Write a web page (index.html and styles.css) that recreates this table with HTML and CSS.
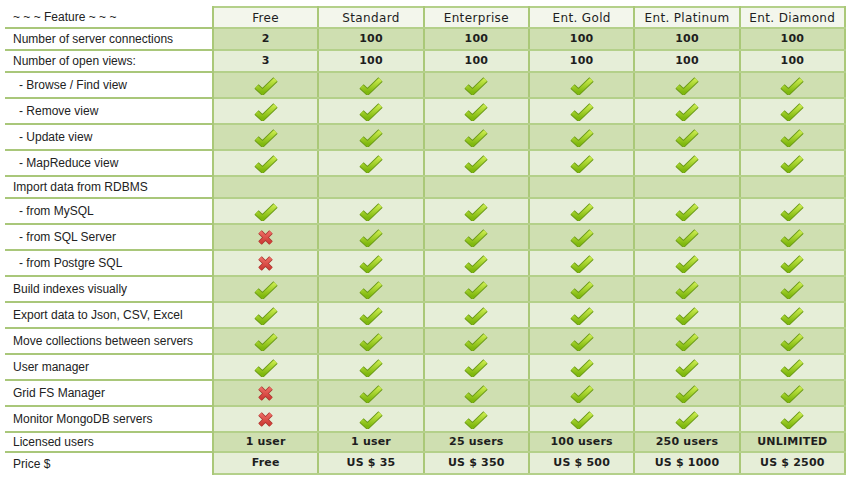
FILE: index.html
```html
<!DOCTYPE html>
<html>
<head>
<meta charset="utf-8">
<link rel="stylesheet" href="styles.css">
</head>
<body>
<svg class="defs" width="0" height="0">
  <defs>
    <linearGradient id="gchk" x1="0" y1="0" x2="0" y2="1">
      <stop offset="0" stop-color="#c8ea4c"/>
      <stop offset="1" stop-color="#7fb80e"/>
    </linearGradient>
    <linearGradient id="gx" x1="0" y1="0" x2="0" y2="1">
      <stop offset="0" stop-color="#ec6a62"/>
      <stop offset="1" stop-color="#cc3a34"/>
    </linearGradient>
    <g id="chk">
      <path d="M2.5 9.5 L8.5 15 L21.5 2.5" fill="none" stroke="#6b9a18" stroke-width="6.2" stroke-linejoin="miter"/>
      <path d="M2.5 9.5 L8.5 15 L21.5 2.5" fill="none" stroke="url(#gchk)" stroke-width="4.4" stroke-linejoin="miter"/>
    </g>
    <g id="crs">
      <path d="M3 3 L14 14 M14 3 L3 14" fill="none" stroke="#a83430" stroke-width="5"/>
      <path d="M3 3 L14 14 M14 3 L3 14" fill="none" stroke="url(#gx)" stroke-width="3.4"/>
    </g>
  </defs>
</svg>
<div class="wrap">
<table class="cmp">
  <colgroup>
    <col class="c-feat"><col><col><col><col><col><col>
  </colgroup>
  <tr class="head">
    <td class="feat">~ ~ ~ Feature ~ ~ ~</td>
    <td>Free</td><td>Standard</td><td>Enterprise</td><td>Ent. Gold</td><td>Ent. Platinum</td><td>Ent. Diamond</td>
  </tr>
  <tr class="txt dark">
    <td class="feat">Number of server connections</td>
    <td>2</td><td>100</td><td>100</td><td>100</td><td>100</td><td>100</td>
  </tr>
  <tr class="txt light">
    <td class="feat">Number of open views:</td>
    <td>3</td><td>100</td><td>100</td><td>100</td><td>100</td><td>100</td>
  </tr>
  <tr class="ic dark">
    <td class="feat sub">- Browse / Find view</td>
    <td><svg class="chk" viewBox="0 0 24 18"><use href="#chk"/></svg></td><td><svg class="chk" viewBox="0 0 24 18"><use href="#chk"/></svg></td><td><svg class="chk" viewBox="0 0 24 18"><use href="#chk"/></svg></td><td><svg class="chk" viewBox="0 0 24 18"><use href="#chk"/></svg></td><td><svg class="chk" viewBox="0 0 24 18"><use href="#chk"/></svg></td><td><svg class="chk" viewBox="0 0 24 18"><use href="#chk"/></svg></td>
  </tr>
  <tr class="ic light">
    <td class="feat sub">- Remove view</td>
    <td><svg class="chk" viewBox="0 0 24 18"><use href="#chk"/></svg></td><td><svg class="chk" viewBox="0 0 24 18"><use href="#chk"/></svg></td><td><svg class="chk" viewBox="0 0 24 18"><use href="#chk"/></svg></td><td><svg class="chk" viewBox="0 0 24 18"><use href="#chk"/></svg></td><td><svg class="chk" viewBox="0 0 24 18"><use href="#chk"/></svg></td><td><svg class="chk" viewBox="0 0 24 18"><use href="#chk"/></svg></td>
  </tr>
  <tr class="ic dark">
    <td class="feat sub">- Update view</td>
    <td><svg class="chk" viewBox="0 0 24 18"><use href="#chk"/></svg></td><td><svg class="chk" viewBox="0 0 24 18"><use href="#chk"/></svg></td><td><svg class="chk" viewBox="0 0 24 18"><use href="#chk"/></svg></td><td><svg class="chk" viewBox="0 0 24 18"><use href="#chk"/></svg></td><td><svg class="chk" viewBox="0 0 24 18"><use href="#chk"/></svg></td><td><svg class="chk" viewBox="0 0 24 18"><use href="#chk"/></svg></td>
  </tr>
  <tr class="ic light">
    <td class="feat sub">- MapReduce view</td>
    <td><svg class="chk" viewBox="0 0 24 18"><use href="#chk"/></svg></td><td><svg class="chk" viewBox="0 0 24 18"><use href="#chk"/></svg></td><td><svg class="chk" viewBox="0 0 24 18"><use href="#chk"/></svg></td><td><svg class="chk" viewBox="0 0 24 18"><use href="#chk"/></svg></td><td><svg class="chk" viewBox="0 0 24 18"><use href="#chk"/></svg></td><td><svg class="chk" viewBox="0 0 24 18"><use href="#chk"/></svg></td>
  </tr>
  <tr class="txt dark">
    <td class="feat">Import data from RDBMS</td>
    <td></td><td></td><td></td><td></td><td></td><td></td>
  </tr>
  <tr class="ic light">
    <td class="feat sub">- from MySQL</td>
    <td><svg class="chk" viewBox="0 0 24 18"><use href="#chk"/></svg></td><td><svg class="chk" viewBox="0 0 24 18"><use href="#chk"/></svg></td><td><svg class="chk" viewBox="0 0 24 18"><use href="#chk"/></svg></td><td><svg class="chk" viewBox="0 0 24 18"><use href="#chk"/></svg></td><td><svg class="chk" viewBox="0 0 24 18"><use href="#chk"/></svg></td><td><svg class="chk" viewBox="0 0 24 18"><use href="#chk"/></svg></td>
  </tr>
  <tr class="ic dark">
    <td class="feat sub">- from SQL Server</td>
    <td><svg class="crs" viewBox="0 0 17 17"><use href="#crs"/></svg></td><td><svg class="chk" viewBox="0 0 24 18"><use href="#chk"/></svg></td><td><svg class="chk" viewBox="0 0 24 18"><use href="#chk"/></svg></td><td><svg class="chk" viewBox="0 0 24 18"><use href="#chk"/></svg></td><td><svg class="chk" viewBox="0 0 24 18"><use href="#chk"/></svg></td><td><svg class="chk" viewBox="0 0 24 18"><use href="#chk"/></svg></td>
  </tr>
  <tr class="ic light">
    <td class="feat sub">- from Postgre SQL</td>
    <td><svg class="crs" viewBox="0 0 17 17"><use href="#crs"/></svg></td><td><svg class="chk" viewBox="0 0 24 18"><use href="#chk"/></svg></td><td><svg class="chk" viewBox="0 0 24 18"><use href="#chk"/></svg></td><td><svg class="chk" viewBox="0 0 24 18"><use href="#chk"/></svg></td><td><svg class="chk" viewBox="0 0 24 18"><use href="#chk"/></svg></td><td><svg class="chk" viewBox="0 0 24 18"><use href="#chk"/></svg></td>
  </tr>
  <tr class="ic dark">
    <td class="feat">Build indexes visually</td>
    <td><svg class="chk" viewBox="0 0 24 18"><use href="#chk"/></svg></td><td><svg class="chk" viewBox="0 0 24 18"><use href="#chk"/></svg></td><td><svg class="chk" viewBox="0 0 24 18"><use href="#chk"/></svg></td><td><svg class="chk" viewBox="0 0 24 18"><use href="#chk"/></svg></td><td><svg class="chk" viewBox="0 0 24 18"><use href="#chk"/></svg></td><td><svg class="chk" viewBox="0 0 24 18"><use href="#chk"/></svg></td>
  </tr>
  <tr class="ic light">
    <td class="feat">Export data to Json, CSV, Excel</td>
    <td><svg class="chk" viewBox="0 0 24 18"><use href="#chk"/></svg></td><td><svg class="chk" viewBox="0 0 24 18"><use href="#chk"/></svg></td><td><svg class="chk" viewBox="0 0 24 18"><use href="#chk"/></svg></td><td><svg class="chk" viewBox="0 0 24 18"><use href="#chk"/></svg></td><td><svg class="chk" viewBox="0 0 24 18"><use href="#chk"/></svg></td><td><svg class="chk" viewBox="0 0 24 18"><use href="#chk"/></svg></td>
  </tr>
  <tr class="ic dark">
    <td class="feat">Move collections between servers</td>
    <td><svg class="chk" viewBox="0 0 24 18"><use href="#chk"/></svg></td><td><svg class="chk" viewBox="0 0 24 18"><use href="#chk"/></svg></td><td><svg class="chk" viewBox="0 0 24 18"><use href="#chk"/></svg></td><td><svg class="chk" viewBox="0 0 24 18"><use href="#chk"/></svg></td><td><svg class="chk" viewBox="0 0 24 18"><use href="#chk"/></svg></td><td><svg class="chk" viewBox="0 0 24 18"><use href="#chk"/></svg></td>
  </tr>
  <tr class="ic light">
    <td class="feat">User manager</td>
    <td><svg class="chk" viewBox="0 0 24 18"><use href="#chk"/></svg></td><td><svg class="chk" viewBox="0 0 24 18"><use href="#chk"/></svg></td><td><svg class="chk" viewBox="0 0 24 18"><use href="#chk"/></svg></td><td><svg class="chk" viewBox="0 0 24 18"><use href="#chk"/></svg></td><td><svg class="chk" viewBox="0 0 24 18"><use href="#chk"/></svg></td><td><svg class="chk" viewBox="0 0 24 18"><use href="#chk"/></svg></td>
  </tr>
  <tr class="ic dark">
    <td class="feat">Grid FS Manager</td>
    <td><svg class="crs" viewBox="0 0 17 17"><use href="#crs"/></svg></td><td><svg class="chk" viewBox="0 0 24 18"><use href="#chk"/></svg></td><td><svg class="chk" viewBox="0 0 24 18"><use href="#chk"/></svg></td><td><svg class="chk" viewBox="0 0 24 18"><use href="#chk"/></svg></td><td><svg class="chk" viewBox="0 0 24 18"><use href="#chk"/></svg></td><td><svg class="chk" viewBox="0 0 24 18"><use href="#chk"/></svg></td>
  </tr>
  <tr class="ic light">
    <td class="feat">Monitor MongoDB servers</td>
    <td><svg class="crs" viewBox="0 0 17 17"><use href="#crs"/></svg></td><td><svg class="chk" viewBox="0 0 24 18"><use href="#chk"/></svg></td><td><svg class="chk" viewBox="0 0 24 18"><use href="#chk"/></svg></td><td><svg class="chk" viewBox="0 0 24 18"><use href="#chk"/></svg></td><td><svg class="chk" viewBox="0 0 24 18"><use href="#chk"/></svg></td><td><svg class="chk" viewBox="0 0 24 18"><use href="#chk"/></svg></td>
  </tr>
  <tr class="lic dark">
    <td class="feat">Licensed users</td>
    <td>1 user</td><td>1 user</td><td>25 users</td><td>100 users</td><td>250 users</td><td>UNLIMITED</td>
  </tr>
  <tr class="price light">
    <td class="feat">Price $</td>
    <td>Free</td><td>US $ 35</td><td>US $ 350</td><td>US $ 500</td><td>US $ 1000</td><td>US $ 2500</td>
  </tr>
</table>
</div>
</body>
</html>
```

FILE: styles.css
```css
html, body {
  margin: 0;
  padding: 0;
  background: #ffffff;
}

.defs {
  position: absolute;
  width: 0;
  height: 0;
  overflow: hidden;
}

.wrap {
  padding: 6px 0 0 5px;
}

.cmp {
  border-collapse: collapse;
  table-layout: fixed;
  width: 841px;
  font-family: "DejaVu Sans", Verdana, sans-serif;
  color: #1e1e1e;
}

.c-feat {
  width: 208px;
}

.cmp td {
  padding: 0;
  text-align: center;
  vertical-align: middle;
  border-top: 2px solid #b4d08a;
  border-bottom: 2px solid #b4d08a;
  border-left: 2px solid #aac878;
  border-right: 2px solid #aac878;
  font-size: 11px;
  font-weight: bold;
  letter-spacing: 0.2px;
  line-height: 14px;
}

.cmp td.feat {
  text-align: left;
  padding-left: 8px;
  font-family: "Liberation Sans", Arial, sans-serif;
  font-weight: normal;
  font-size: 12px;
  letter-spacing: 0;
  color: #222;
  background: #ffffff;
  border-left: none;
  border-top: 2px solid #a9c77a;
  border-bottom: 2px solid #a9c77a;
}

.cmp td.sub {
  padding-left: 14px;
}

.head td {
  background: #f3f6ec;
  font-weight: normal;
  font-size: 12px;
  letter-spacing: 0.35px;
}

.head td.feat {
  border-top: none;
}

.price td.feat {
  border-bottom: none;
}

.dark td {
  background: #cfdfb1;
}

.light td {
  background: #e6eed8;
}

.head { height: 21px; }
.txt { height: 22px; }
.ic { height: 26px; }
.lic { height: 20px; }
.price { height: 22px; }

.chk {
  display: block;
  margin: 1px auto 0;
  width: 24px;
  height: 18px;
}

.crs {
  display: block;
  margin: 0 auto;
  width: 17px;
  height: 17px;
}
```
